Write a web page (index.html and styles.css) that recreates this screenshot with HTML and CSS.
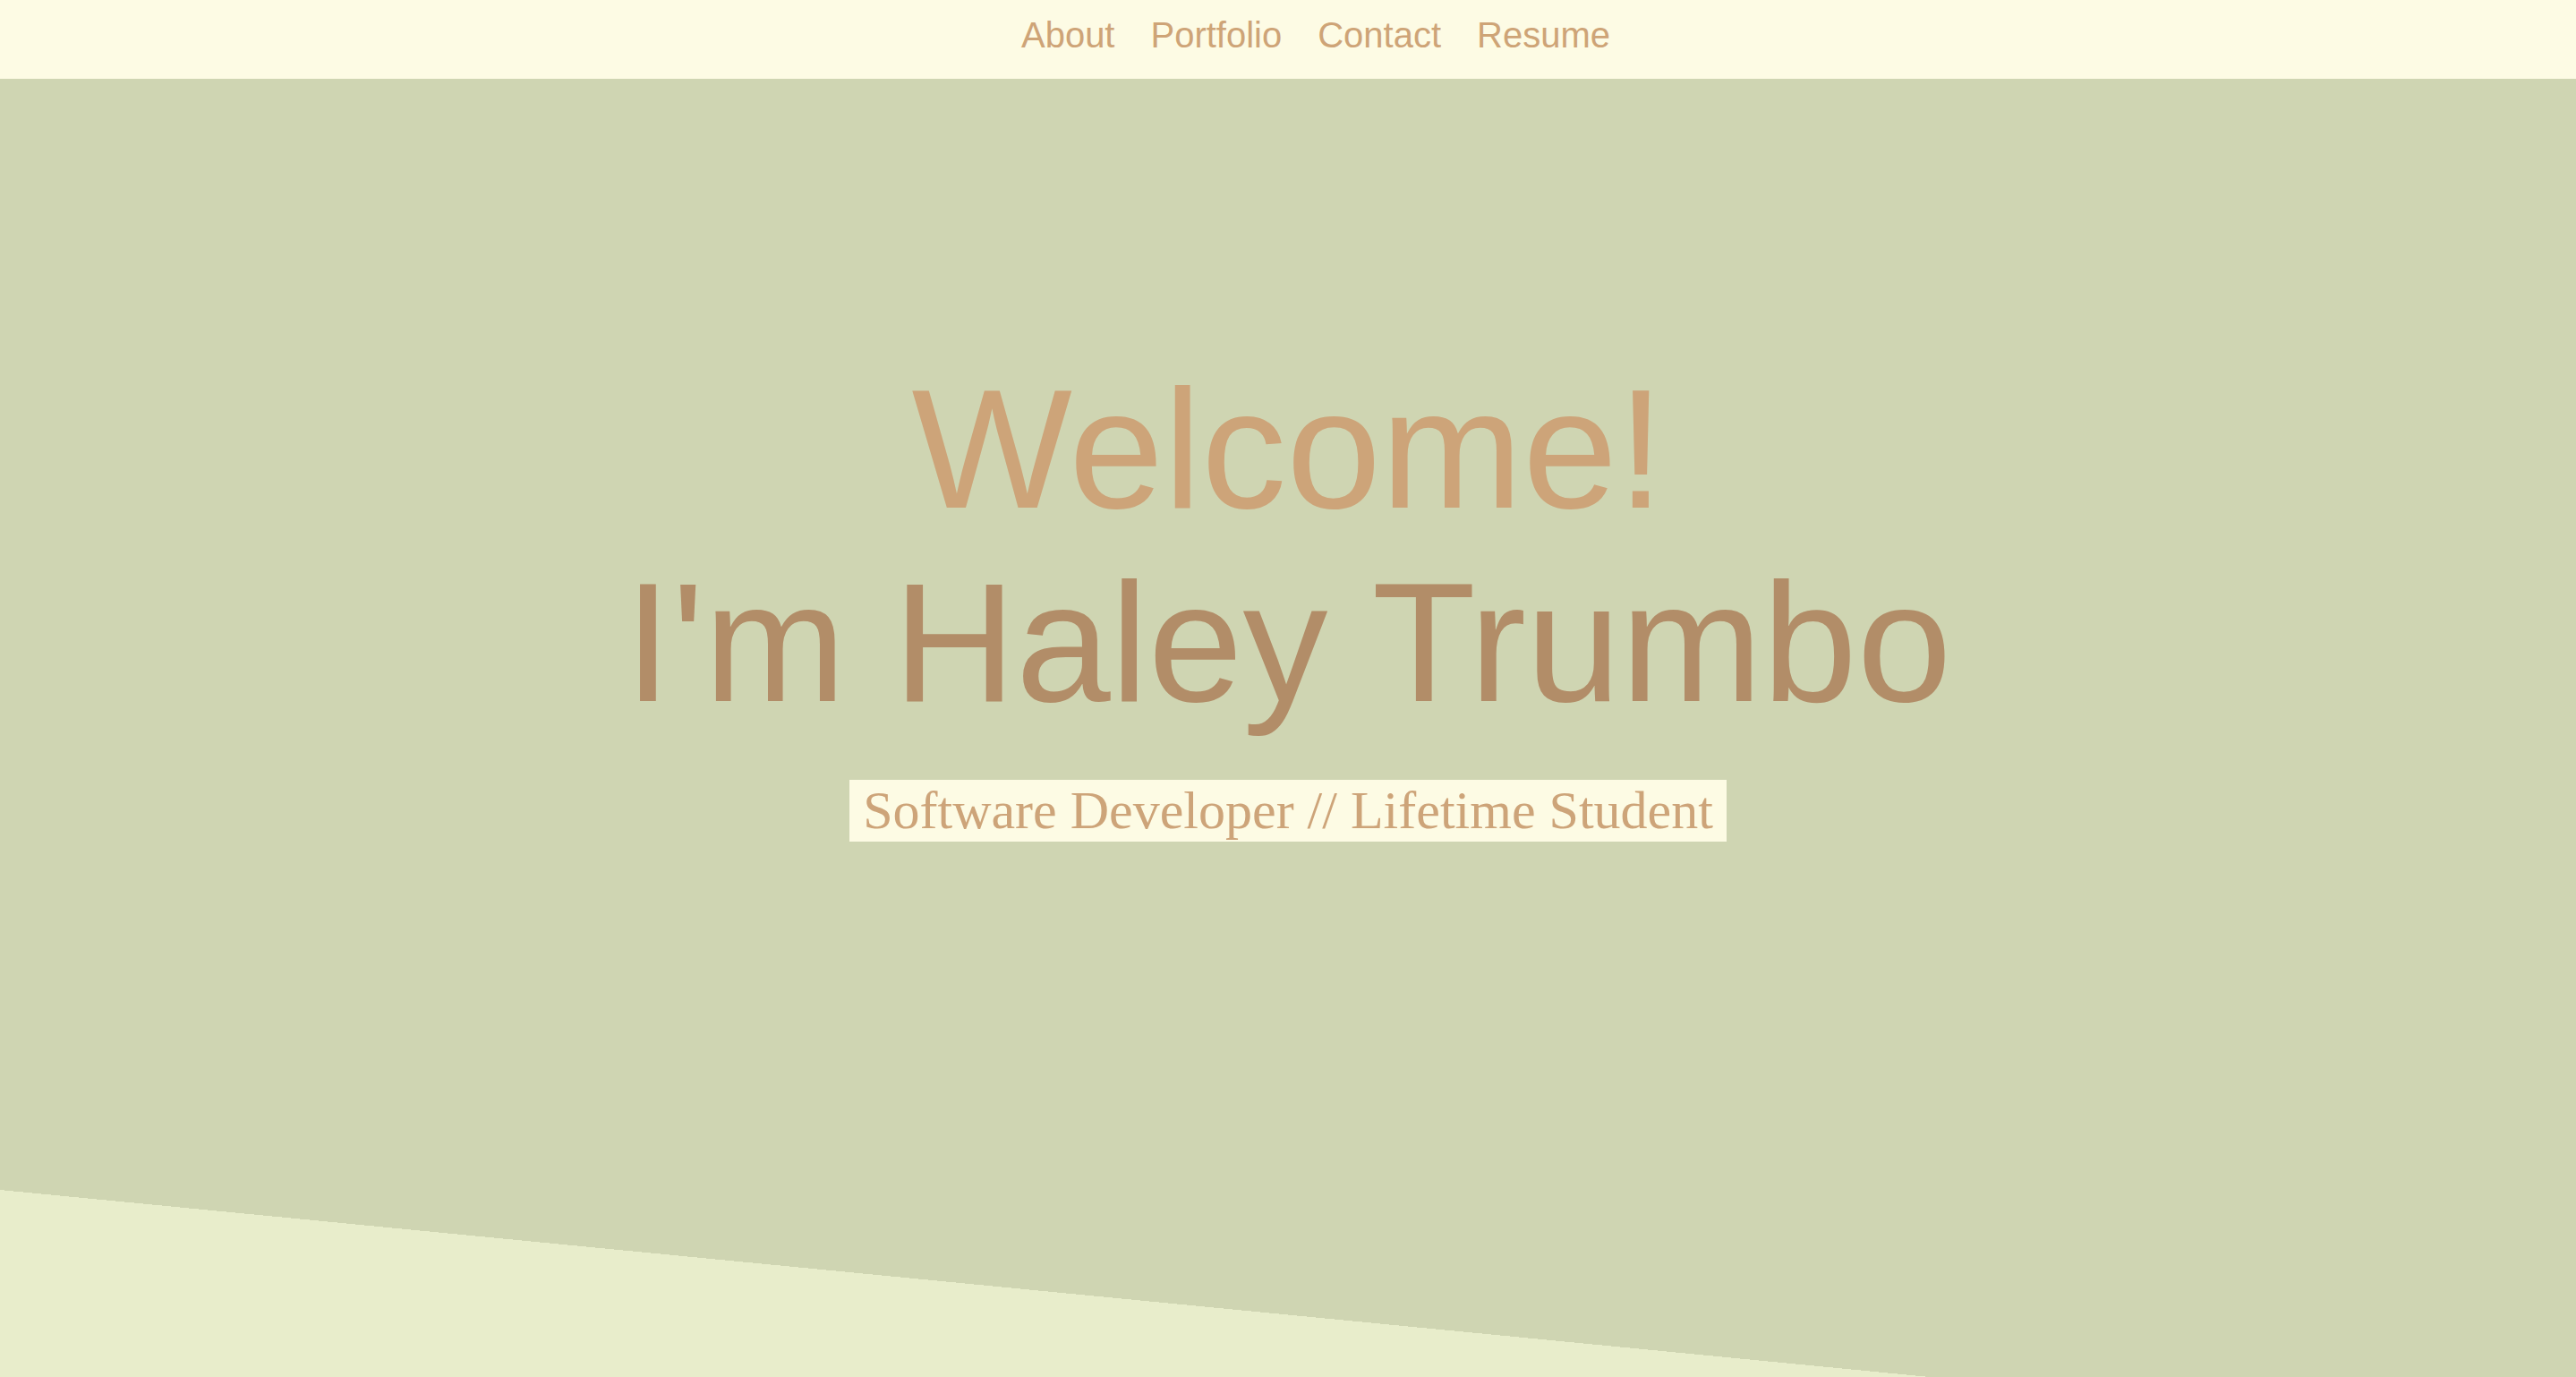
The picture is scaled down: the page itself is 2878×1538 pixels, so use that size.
FILE: index.html
```html
<!DOCTYPE html>
<html lang="en">
<head>
<meta charset="utf-8">
<title>Haley Trumbo</title>
<link rel="stylesheet" href="styles.css">
</head>
<body>
<nav class="topnav">
  <ul class="nav-list">
    <li><a href="#about">About</a></li>
    <li><a href="#portfolio">Portfolio</a></li>
    <li><a href="#contact">Contact</a></li>
    <li><a href="#resume">Resume</a></li>
  </ul>
</nav>
<header class="hero">
  <h1 class="hero-title">
    <span class="welcome">Welcome!</span>
    <span class="name">I'm Haley Trumbo</span>
  </h1>
  <p class="tagline">Software Developer // Lifetime Student</p>
</header>
<section class="about" id="about"></section>
</body>
</html>
```

FILE: styles.css
```css
html, body {
  margin: 0;
  padding: 0;
}
body {
  font-family: "Liberation Sans", Arial, Helvetica, sans-serif;
  background: #e8edcb;
  overflow: hidden;
}
.topnav {
  background: #fdfbe4;
  height: 88px;
  box-sizing: border-box;
  padding-top: 16px;
}
.nav-list {
  list-style: none;
  margin: 0;
  padding: 0 0 0 62px;
  display: flex;
  justify-content: center;
  gap: 40px;
}
.nav-list a {
  font-size: 40px;
  line-height: 46px;
  color: #cea477;
  text-decoration: none;
}
.hero {
  background: #cfd5b2;
  height: 1241px;
  box-sizing: border-box;
  padding-top: 305px;
  display: flex;
  flex-direction: column;
  align-items: center;
}
.hero-title {
  margin: 0;
  font-weight: normal;
  font-size: 190px;
  line-height: 216px;
  text-align: center;
}
.welcome {
  display: block;
  color: #cda479;
}
.name {
  display: block;
  color: #b28d68;
}
.tagline {
  margin: 46px 0 0;
  background: #fdfbe4;
  color: #cda479;
  font-family: "Liberation Serif", "Times New Roman", serif;
  font-size: 60px;
  line-height: 69px;
  padding: 0 15px;
}
.about {
  height: 600px;
  background-color: #e8edcb;
  background-image: linear-gradient(to top right, #e8edcb 50%, #cfd5b2 50%);
  background-size: 100% 279px;
  background-repeat: no-repeat;
}
```
